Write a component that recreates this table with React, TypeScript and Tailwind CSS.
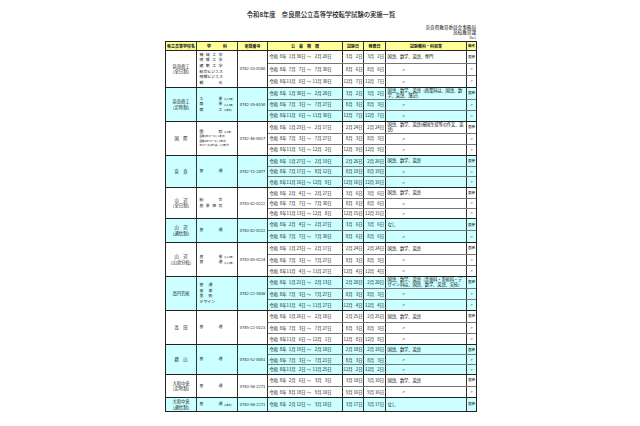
type Dept = { t: string; n?: string; s?: boolean };
type Row = [number, number, number, number, number, number, number, number, string?, string?];
type Block = {
  name: string[];
  depts: Dept[];
  deptW: string;
  tel: string;
  rowH: string;
  bg: string;
  rows: Row[];
};

const blocks: Block[] = [
  {
    name: ["奈良商工", "（全日制）"],
    depts: [{ t: "機械工学" }, { t: "情報工学" }, { t: "建築工学" }, { t: "総合ビジネス" }, { t: "情報ビジネス" }, { t: "観光" }],
    deptW: "w-[23px]",
    tel: "0742-33-0260",
    rowH: "h-[12px]",
    bg: "bg-white",
    rows: [
      [1, 30, 2, 20, 3, 2, 3, 2, "国語、数学、英語、専門", "面接"],
      [7, 7, 7, 30, 8, 6, 8, 6],
      [11, 6, 11, 30, 12, 7, 12, 7],
    ],
  },
  {
    name: ["奈良商工", "（定時制）"],
    depts: [{ t: "工業", n: "(1,2,3年)" }, { t: "商業", n: "(1,2,3年)" }, { t: "商工", n: "(1年次)" }],
    deptW: "w-[23px]",
    tel: "0742-35-6150",
    rowH: "h-[11px]",
    bg: "bg-[#ccffff]",
    rows: [
      [1, 30, 2, 20, 3, 2, 3, 2, "国語、数学、英語（商業科は、国語、数学、英語、簿記）", "面接"],
      [7, 3, 7, 27, 8, 3, 8, 3],
      [11, 6, 11, 30, 12, 7, 12, 7],
    ],
  },
  {
    name: ["国　際"],
    depts: [
      { t: "国際", n: "(2,3年)" },
      { t: "国際(IBコース)", n: "(1年次)", s: true },
      { t: "国際(DPコース)", n: "(2年次)", s: true },
      { t: "IBコース(DP)は、2,3年次", s: true },
    ],
    deptW: "w-[23px]",
    tel: "0742-46-0017",
    rowH: "h-[11px]",
    bg: "bg-white",
    rows: [
      [1, 23, 2, 17, 2, 24, 2, 24, "国語、数学、英語(帰国生徒等の作文、英語)", "面接"],
      [7, 3, 7, 27, 8, 3, 8, 3],
      [11, 5, 12, 2, 12, 9, 12, 9],
    ],
  },
  {
    name: ["奈　良"],
    depts: [{ t: "普通" }],
    deptW: "w-[23px]",
    tel: "0742-71-2477",
    rowH: "h-[10.4px]",
    bg: "bg-[#ccffff]",
    rows: [
      [1, 27, 2, 19, 2, 26, 2, 26, "国語、数学、英語", "面接"],
      [7, 17, 8, 12, 8, 19, 8, 19],
      [11, 16, 12, 9, 12, 16, 12, 16],
    ],
  },
  {
    name: ["山　辺", "（全日制）"],
    depts: [{ t: "総合" }, { t: "農業探究" }],
    deptW: "w-[23px]",
    tel: "0743-82-0222",
    rowH: "h-[10px]",
    bg: "bg-white",
    rows: [
      [2, 4, 2, 27, 3, 6, 3, 6, "国語、数学、英語", "面接"],
      [7, 7, 7, 30, 8, 6, 8, 6],
      [11, 13, 12, 8, 12, 15, 12, 15],
    ],
  },
  {
    name: ["山　辺", "（通信制）"],
    depts: [{ t: "普通" }],
    deptW: "w-[23px]",
    tel: "0743-82-0222",
    rowH: "h-[11.5px]",
    bg: "bg-[#ccffff]",
    rows: [
      [2, 4, 2, 27, 3, 6, 3, 6, "なし", "面接"],
      [7, 7, 7, 30, 8, 6, 8, 6],
    ],
  },
  {
    name: ["山　辺", "（山添分校）"],
    depts: [{ t: "農業", n: "(1,2,3年)" }, { t: "普通", n: "(1,2,3年)" }],
    deptW: "w-[23px]",
    tel: "0743-85-0214",
    rowH: "h-[11px]",
    bg: "bg-white",
    rows: [
      [1, 23, 2, 17, 2, 24, 2, 24, "国語、数学、英語", "面接"],
      [7, 3, 7, 27, 8, 3, 8, 3],
      [11, 4, 11, 27, 12, 4, 12, 4],
    ],
  },
  {
    name: ["高円芸術"],
    depts: [{ t: "普通" }, { t: "音楽" }, { t: "美術" }, { t: "デザイン" }],
    deptW: "w-[13px]",
    tel: "0742-22-5836",
    rowH: "h-[11px]",
    bg: "bg-[#ccffff]",
    rows: [
      [1, 21, 2, 13, 2, 20, 2, 20, "国語、数学、英語（音楽科・美術科・デザイン科は、国語、数学、英語、実技）", "面接"],
      [7, 3, 7, 27, 8, 3, 8, 3],
      [11, 4, 11, 27, 12, 4, 12, 4],
    ],
  },
  {
    name: ["高　田"],
    depts: [{ t: "普通" }],
    deptW: "w-[23px]",
    tel: "0745-22-0123",
    rowH: "h-[11px]",
    bg: "bg-white",
    rows: [
      [1, 26, 2, 18, 2, 25, 2, 25, "国語、数学、英語", "面接"],
      [7, 3, 7, 27, 8, 3, 8, 3],
      [11, 6, 12, 1, 12, 8, 12, 8],
    ],
  },
  {
    name: ["郡　山"],
    depts: [{ t: "普通" }],
    deptW: "w-[23px]",
    tel: "0743-52-0001",
    rowH: "h-[9.7px]",
    bg: "bg-[#ccffff]",
    rows: [
      [1, 19, 2, 10, 2, 18, 2, 18, "国語、数学、英語", "面接"],
      [7, 3, 7, 21, 8, 3, 8, 3],
      [11, 2, 11, 25, 12, 2, 12, 2],
    ],
  },
  {
    name: ["大和中央", "（定時制）"],
    depts: [{ t: "普通" }],
    deptW: "w-[23px]",
    tel: "0743-56-2271",
    rowH: "h-[11px]",
    bg: "bg-white",
    rows: [
      [2, 6, 3, 3, 3, 10, 3, 10, "国語、数学、英語", "面接"],
      [8, 18, 9, 10, 9, 16, 9, 16],
    ],
  },
  {
    name: ["大和中央", "（通信制）"],
    depts: [{ t: "普通", n: "(1年次)" }],
    deptW: "w-[23px]",
    tel: "0743-56-2271",
    rowH: "h-[13px]",
    bg: "bg-[#ccffff]",
    rows: [[2, 12, 3, 10, 3, 17, 3, 17, "なし", "面接"]],
  },
];

// month / day pair, right aligned in fixed slots
const MD = ({ m, d }: { m: number; d: number }) => (
  <span className="flex">
    <span className="w-[9px] text-right">{m}月</span>
    <span className="w-[10px] text-right">{d}日</span>
  </span>
);

const Th = ({ w, children }: { w: string; children: React.ReactNode }) => (
  <div className={`${w} border-r border-[#333] flex items-center justify-center font-bold`}>{children}</div>
);

const DataRow = ({ r, h, first }: { r: Row; h: string; first: boolean }) => {
  const subj = r[8] ?? "〃";
  const note = r[9] ?? "〃";
  return (
    <div className={`flex ${h} ${first ? "" : "border-t border-[#777]"}`}>
      <div className="w-[75px] border-r border-[#333] flex items-center pl-[1.5px] whitespace-nowrap">
        <span className="w-[9px]">令和</span>
        <span className="w-[8px] text-right">8年</span>
        <MD m={r[0]} d={r[1]} />
        <span className="w-[7px] text-center">～</span>
        <MD m={r[2]} d={r[3]} />
      </div>
      <div className="w-[21px] border-r border-[#333] flex items-center justify-center whitespace-nowrap">
        <MD m={r[4]} d={r[5]} />
      </div>
      <div className="w-[22px] border-r border-[#333] flex items-center justify-center whitespace-nowrap">
        <MD m={r[6]} d={r[7]} />
      </div>
      <div className="w-[81px] border-r border-[#333] flex items-center pl-[1.5px] pr-[1px] leading-[1.1] tracking-[-0.15px] overflow-hidden">
        {subj === "〃" ? <span className="pl-[14px]">〃</span> : <span>{subj}</span>}
      </div>
      <div className="w-[9px] flex items-center justify-center text-[3.6px] whitespace-nowrap">{note}</div>
    </div>
  );
};

export default function App() {
  return (
    <div className="w-[640px] h-[426px] bg-white text-[#111] font-['Noto_Sans_CJK_JP','Noto_Sans',sans-serif] flex flex-col">
      <div className="ml-[165px] w-[312px] flex flex-col">
        <div className="pt-[11px] text-center text-[6.3px] font-medium leading-[8px]">
          令和8年度　奈良県公立高等学校転学試験の実施一覧
        </div>
        <div className="mt-[6px] flex flex-col items-end text-[4.6px] leading-[5px] pr-[1px]">
          <span>奈良県教育委員会事務局</span>
          <span>高校教育課</span>
          <span className="text-[3px] leading-[5px] mt-[0.5px]">No.1</span>
        </div>

        <div className="border border-[#222] text-[4.3px] leading-none">
          <div className="flex h-[9px] bg-[#ffff99] border-b border-[#222] text-[4px] whitespace-nowrap">
            <Th w="w-[31px]">県立高等学校名</Th>
            <Th w="w-[41px]">学　　　科</Th>
            <Th w="w-[30px]">電話番号</Th>
            <Th w="w-[75px]">公　募　期　間</Th>
            <Th w="w-[21px]">試験日</Th>
            <Th w="w-[22px]">発表日</Th>
            <Th w="w-[81px]">試験教科・科目等</Th>
            <div className="w-[9px] flex items-center justify-center font-bold text-[3.5px]">備考</div>
          </div>

          {blocks.map((b, i) => (
            <div key={i} className={`flex ${b.bg} ${i === 0 ? "" : "border-t border-[#222]"}`}>
              <div className="w-[31px] border-r border-[#333] flex flex-col items-center justify-center gap-[1px] whitespace-nowrap">
                {b.name.map((n) => (
                  <span key={n}>{n}</span>
                ))}
              </div>
              <div className="w-[41px] border-r border-[#333] flex flex-col justify-center pl-[2.5px] text-[3.9px] leading-[5.6px] whitespace-nowrap">
                {b.depts.map((d) =>
                  d.s ? (
                    <div key={d.t} className="flex items-end text-[2.6px] leading-[4.2px]">
                      <span>{d.t}</span>
                      {d.n && <span className="ml-[1px] text-[2.3px]">{d.n}</span>}
                    </div>
                  ) : (
                    <div key={d.t} className="flex items-end">
                      <span className={`${b.deptW} text-justify [text-align-last:justify]`}>{d.t}</span>
                      {d.n && <span className="ml-[1.5px] text-[2.4px] leading-[4px]">{d.n}</span>}
                    </div>
                  ),
                )}
              </div>
              <div className="w-[30px] border-r border-[#333] flex items-center justify-center text-[4.1px] whitespace-nowrap">
                {b.tel}
              </div>
              <div className="flex flex-col">
                {b.rows.map((r, j) => (
                  <DataRow key={j} r={r} h={b.rowH} first={j === 0} />
                ))}
              </div>
            </div>
          ))}
        </div>
      </div>
    </div>
  );
}
